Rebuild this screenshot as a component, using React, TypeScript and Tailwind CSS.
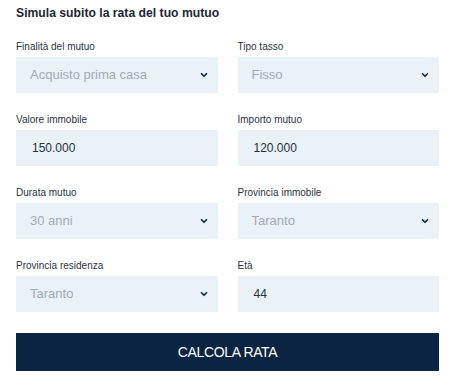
import { ChevronDown } from 'lucide-react';

type Field = {
  label: string;
  value: string;
  select?: boolean;
};

const fields: Field[] = [
  { label: 'Finalità del mutuo', value: 'Acquisto prima casa', select: true },
  { label: 'Tipo tasso', value: 'Fisso', select: true },
  { label: 'Valore immobile', value: '150.000' },
  { label: 'Importo mutuo', value: '120.000' },
  { label: 'Durata mutuo', value: '30 anni', select: true },
  { label: 'Provincia immobile', value: 'Taranto', select: true },
  { label: 'Provincia residenza', value: 'Taranto', select: true },
  { label: 'Età', value: '44' },
];

export default function App() {
  return (
    <main
      className="min-h-screen w-[450px] bg-white pl-4 pr-[11px] pt-[5px] text-[#1f2a36]"
      style={{ fontFamily: '"Liberation Sans", Arial, sans-serif' }}
    >
      {/* Title */}
      <h1 className="text-[12.2px] font-bold leading-4 text-[#1d2733]">
        Simula subito la rata del tuo mutuo
      </h1>

      {/* Form */}
      <div className="mt-[19px] grid grid-cols-2 gap-x-5 gap-y-5">
        {fields.map((f) => (
          <div key={f.label}>
            <label className="mb-[3px] block text-[10px] leading-[14px] text-[#2a3440]">
              {f.label}
            </label>

            <div className="flex h-9 items-center justify-between bg-[#eaf1f7] pl-[14px] pr-[9px]">
              <span
                className={
                  f.select
                    ? 'text-[13px] text-[#a3acb5]'
                    : 'pl-[2px] text-[12px] text-[#27313c]'
                }
              >
                {f.value}
              </span>

              {f.select && (
                <ChevronDown
                  className="h-[10px] w-[10px] text-[#15253a]"
                  strokeWidth={4}
                />
              )}
            </div>
          </div>
        ))}
      </div>

      {/* Button */}
      <button className="mt-[21px] flex h-[38px] w-full items-center justify-center bg-[#0a2442] text-[14px] tracking-tight text-white">
        CALCOLA RATA
      </button>
    </main>
  );
}
